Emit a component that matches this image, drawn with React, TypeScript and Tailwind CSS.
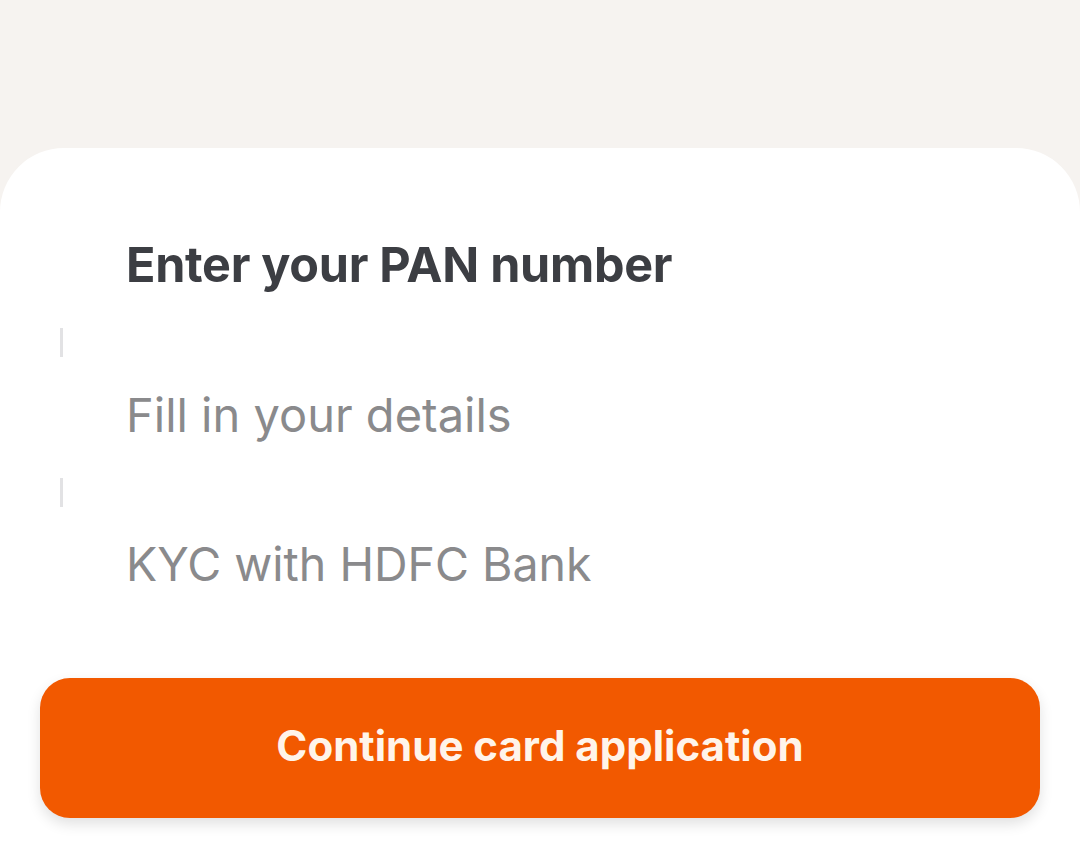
import React from "react";

export default function App() {
  const font = { fontFamily: "Inter, 'Noto Sans', sans-serif" };
  return (
    <div className="w-[1080px] h-[860px] bg-[#f6f3f0] overflow-hidden" style={font}>
      <div className="h-[148px]" />
      <div className="bg-white rounded-t-[64px] h-[712px] pt-[67px]">
        <div className="flex flex-col">
          <div className="h-[100px] flex items-center pl-[126px]">
            <span className="text-[48.5px] font-bold text-[#3c3e43] tracking-[-0.3px]">Enter your PAN number</span>
          </div>
          <div className="h-[50px] flex items-center pl-[60px] pt-[4px]">
            <div className="w-[3px] h-[29px] bg-[#e2e2e4]" />
          </div>
          <div className="h-[100px] flex items-center pl-[126px]">
            <span className="text-[47px] text-[#8a8a8c]">Fill in your details</span>
          </div>
          <div className="h-[50px] flex items-center pl-[60px] pt-[4px]">
            <div className="w-[3px] h-[29px] bg-[#e2e2e4]" />
          </div>
          <div className="h-[100px] flex items-center pl-[126px]">
            <span className="text-[46.5px] text-[#8a8a8c]">KYC with HDFC Bank</span>
          </div>
        </div>
        <div className="px-[40px] mt-[63px]">
          <button className="w-full h-[140px] rounded-[30px] bg-[#f25900] shadow-[0_6px_14px_rgba(0,0,0,0.12)] flex items-center justify-center pb-[6px]">
            <span className="text-[42px] font-bold text-[#fff4ea]">Continue card application</span>
          </button>
        </div>
      </div>
    </div>
  );
}
